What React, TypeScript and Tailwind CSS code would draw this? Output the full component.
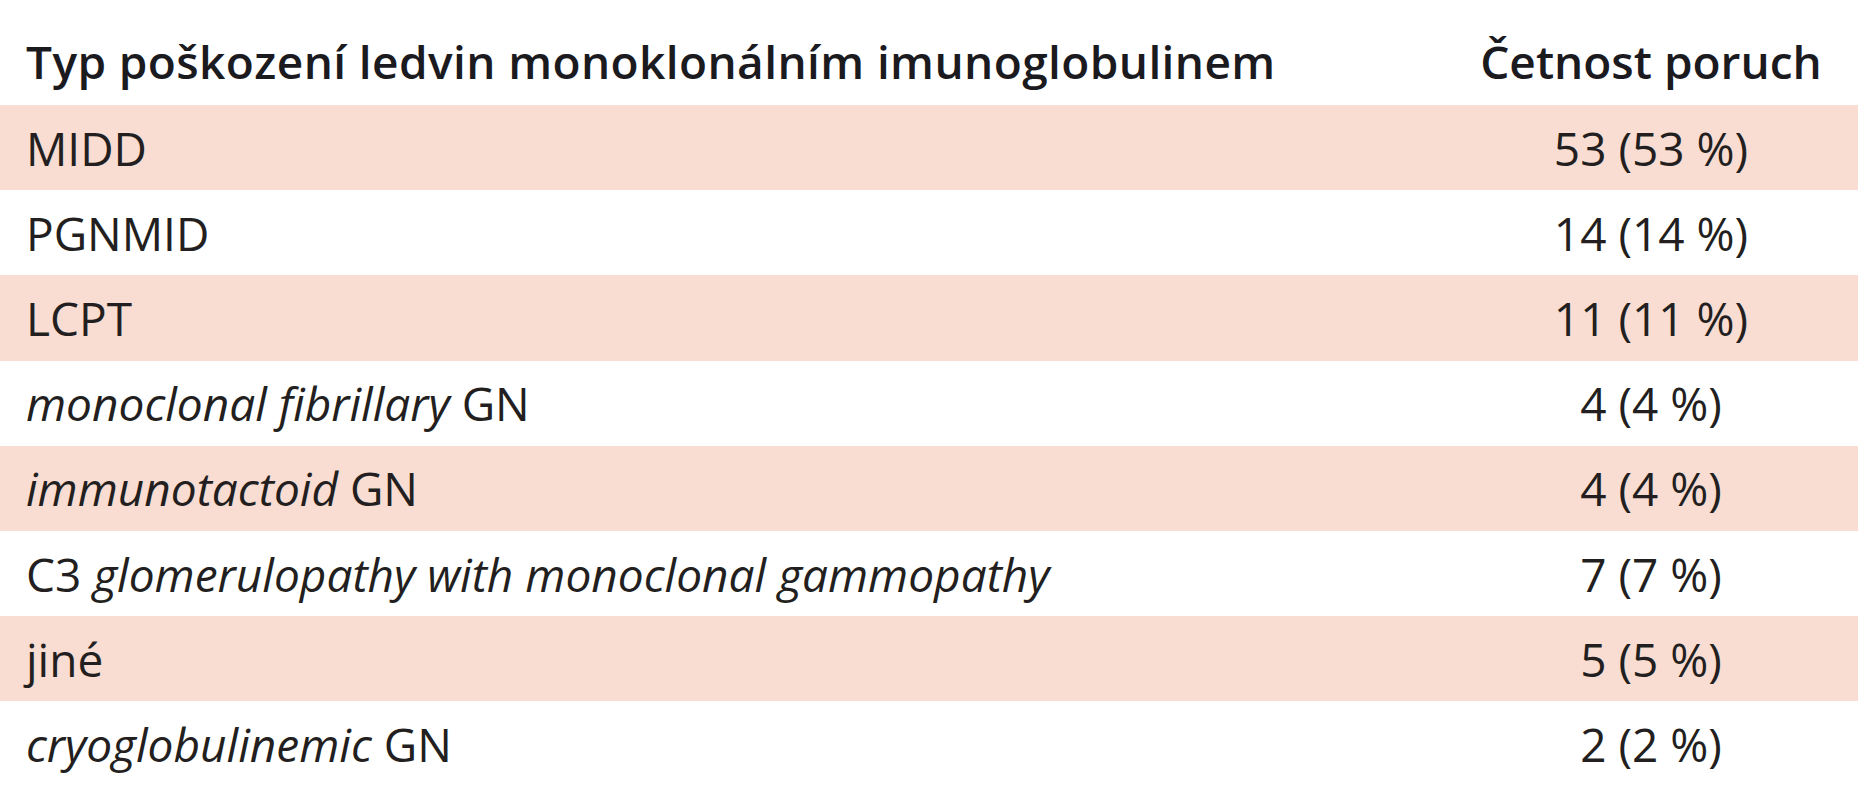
import React from "react";

type Row = { label: React.ReactNode; value: string };

const rows: Row[] = [
  { label: "MIDD", value: "53 (53 %)" },
  { label: "PGNMID", value: "14 (14 %)" },
  { label: "LCPT", value: "11 (11 %)" },
  {
    label: (
      <>
        <i>monoclonal fibrillary</i> GN
      </>
    ),
    value: "4 (4 %)",
  },
  {
    label: (
      <>
        <i>immunotactoid</i> GN
      </>
    ),
    value: "4 (4 %)",
  },
  {
    label: (
      <>
        C3 <i>glomerulopathy with monoclonal gammopathy</i>
      </>
    ),
    value: "7 (7 %)",
  },
  { label: "jiné", value: "5 (5 %)" },
  {
    label: (
      <>
        <i>cryoglobulinemic</i> GN
      </>
    ),
    value: "2 (2 %)",
  },
];

export default function App() {
  return (
    <div className="w-[1874px] h-[800px] bg-white font-['Open_Sans','Noto_Sans',sans-serif] text-[#231f20] overflow-hidden">
      <div className="w-[1858px]">
        <div className="grid grid-cols-[1444px_414px] h-[105px] pt-[38px] text-[46px] leading-none font-semibold text-[#1b1a1f]">
          <div className="pl-[26px] whitespace-nowrap tracking-[0.4px]">
            Typ poškození ledvin monoklonálním imunoglobulinem
          </div>
          <div className="text-center whitespace-nowrap">Četnost poruch</div>
        </div>
        {rows.map((r, i) => (
          <div
            key={i}
            className={
              "grid grid-cols-[1444px_414px] h-[85.2px] items-center text-[46px] leading-none " +
              (i % 2 === 0 ? "bg-[#f9dcd2]" : "bg-white")
            }
          >
            <div className="pl-[26px] whitespace-nowrap">{r.label}</div>
            <div className="text-center whitespace-nowrap">{r.value}</div>
          </div>
        ))}
      </div>
    </div>
  );
}
